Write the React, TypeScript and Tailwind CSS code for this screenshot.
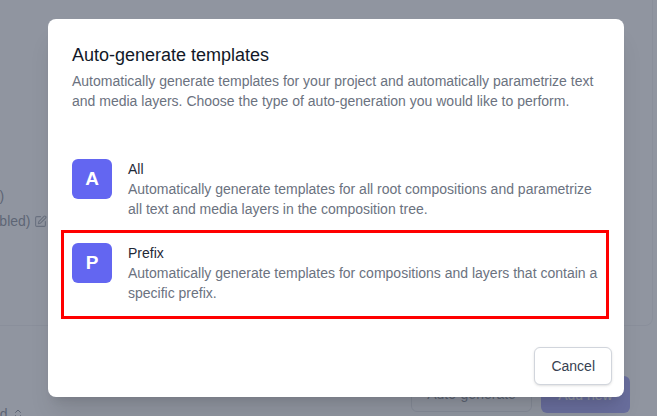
import React from "react";
import { ChevronsUpDown, SquarePen } from "lucide-react";

function Item({ letter, title, desc }: { letter: string; title: string; desc: string }) {
  return (
    <div className="-mx-3 flex gap-4 px-3 py-3">
      <div className="flex h-10 w-10 shrink-0 items-center justify-center rounded-md bg-[#6366f1] text-[19px] font-semibold text-white">
        {letter}
      </div>
      <div className="text-sm leading-5">
        <div className="text-[#1f2937]">{title}</div>
        <div className="text-[#6b7280]">{desc}</div>
      </div>
    </div>
  );
}

export default function App() {
  return (
    <div className="relative h-[416px] w-[657px] overflow-hidden bg-white font-['Liberation_Sans',Arial,sans-serif]">
      {/* background page */}
      <div className="flex h-full flex-col">
        <div className="mr-[4px] h-[326px] shrink-0 rounded-br-lg border-b border-r border-gray-200 bg-white pt-[186px] text-sm text-gray-700">
          <div className="ml-[-13px] leading-5">(0)</div>
          <div className="ml-[-31px] mt-[5px] flex items-center gap-1 leading-5">
            (disabled) <SquarePen size={13} className="text-gray-500" />
          </div>
        </div>
        <div className="flex items-start justify-between pt-[50px] pr-[27px]">
          <div className="ml-[-8px] mt-[28px] flex items-center gap-1 text-sm text-gray-700">
            ed <ChevronsUpDown size={12} />
          </div>
          <div className="flex gap-[9px]">
            <div className="flex h-[36px] w-[121px] items-center justify-center rounded-md border border-gray-300 bg-white text-sm text-gray-700">
              Auto-generate
            </div>
            <div className="flex h-[37px] w-[89px] items-center justify-center rounded-md bg-[#6366f1] text-sm text-white">
              Add new
            </div>
          </div>
        </div>
      </div>

      {/* overlay */}
      <div className="absolute inset-0 bg-[#6b7280]/75" />

      {/* modal */}
      <div className="absolute left-[48px] top-[19px] flex h-[378px] w-[576px] flex-col rounded-lg bg-white shadow-xl">
        <div className="px-6 pt-[22px]">
          <h2 className="text-lg leading-7 text-[#111827]">Auto-generate templates</h2>
          <p className="mt-[2px] text-sm leading-5 text-[#6b7280]">
            Automatically generate templates for your project and automatically parametrize text and media layers. Choose the type of auto-generation you would like to perform.
          </p>
          <div className="mt-9">
            <Item
              letter="A"
              title="All"
              desc="Automatically generate templates for all root compositions and parametrize all text and media layers in the composition tree."
            />
            <Item
              letter="P"
              title="Prefix"
              desc="Automatically generate templates for compositions and layers that contain a specific prefix."
            />
          </div>
        </div>
        <div className="mt-auto flex justify-end p-3">
          <button className="rounded-md border border-gray-300 bg-white px-4 py-2 text-sm leading-5 text-[#374151] shadow-sm">
            Cancel
          </button>
        </div>
        {/* annotation highlight */}
        <div className="pointer-events-none absolute left-[13px] top-[211px] h-[89px] w-[548px] border-[3px] border-[#ff0000]" />
      </div>
    </div>
  );
}
